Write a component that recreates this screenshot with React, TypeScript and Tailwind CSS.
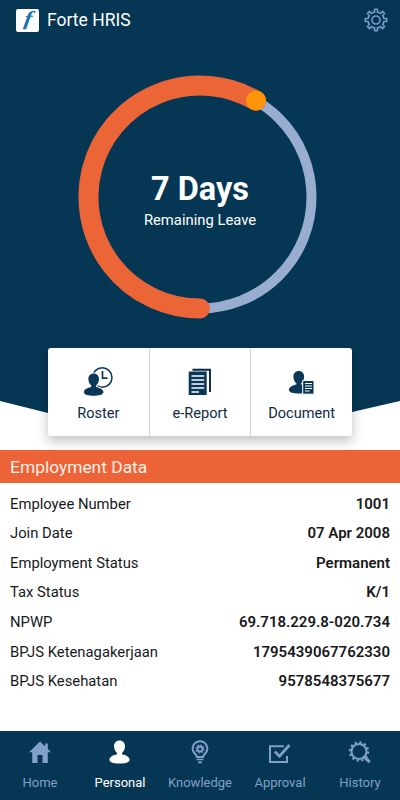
import type { ReactNode } from 'react';

const PERSON =
  'M12 0C8.4 0 6.300 2.500 6.300 6c0 3.200 1.500 5.600 3.100 7v1.400C5.500 15.400 1.500 16.800 1.500 20.200c0 2.500 5 3.800 10.500 3.800s10.500-1.300 10.500-3.800c0-3.400-4-4.800-7.900-5.800V13c1.600-1.400 3.100-3.800 3.100-7C17.700 2.500 15.600 0 12 0Z';

const employment = [
  { label: 'Employee Number', value: '1001' },
  { label: 'Join Date', value: '07 Apr 2008' },
  { label: 'Employment Status', value: 'Permanent' },
  { label: 'Tax Status', value: 'K/1' },
  { label: 'NPWP', value: '69.718.229.8-020.734' },
  { label: 'BPJS Ketenagakerjaan', value: '1795439067762330' },
  { label: 'BPJS Kesehatan', value: '9578548375677' },
];

function gearPath(teeth: number, center: number, outer: number, inner: number) {
  const step = 360 / teeth;
  const points: string[] = [];
  for (let i = 0; i < teeth; i++) {
    const corners = [
      [-0.24, inner],
      [-0.17, outer],
      [0.17, outer],
      [0.24, inner],
      [0.5, inner],
    ];
    for (const [offset, radius] of corners) {
      const angle = ((i + offset) * step * Math.PI) / 180;
      points.push(`${(center + radius * Math.sin(angle)).toFixed(2)} ${(center - radius * Math.cos(angle)).toFixed(2)}`);
    }
  }
  return `M${points.join('L')}Z`;
}

function LogoIcon() {
  return (
    <svg width="23" height="23" viewBox="0 0 23 23" className="shrink-0 overflow-visible">
      <rect width="23" height="23" rx="2" fill="#fff" />
      <text
        transform="translate(7.2 15.8) skewX(-8) scale(1.25 1)"
        fontSize="20"
        fill="#1874ae"
        className="font-['Liberation_Serif',serif] font-bold italic"
      >
        f
      </text>
    </svg>
  );
}

function GearIcon() {
  return (
    <svg width="24" height="24" viewBox="0 0 24 24" fill="none" stroke="#7c9bc8" strokeWidth="1.600" strokeLinejoin="round">
      <path d={gearPath(8, 12, 10.8, 8)} />
      <circle cx="12" cy="12" r="4" />
    </svg>
  );
}

function LeaveRing() {
  return (
    <svg width="244" height="244" viewBox="78 75 244 244" fill="none">
      <circle cx="200" cy="197" r="111.500" stroke="#98add0" strokeWidth="10" />
      <path d="M200 308.500A111.500 111.500 0 1 1 256 100.600" stroke="#ec6537" strokeWidth="20" strokeLinecap="round" />
      <circle cx="256" cy="100.600" r="10" fill="#ff9408" />
    </svg>
  );
}

function RosterIcon() {
  return (
    <svg width="32" height="32" viewBox="0 0 32 32" fill="#0a3757">
      <circle cx="20.300" cy="12.500" r="9.700" fill="none" stroke="#0a3757" strokeWidth="1.500" />
      <path d="M20.500 6v7.200h5" fill="none" stroke="#0a3757" strokeWidth="1.700" />
      <path d={PERSON} transform="translate(.5 8.500) scale(.93)" stroke="#fff" strokeWidth="2.400" />
      <path d={PERSON} transform="translate(.5 8.500) scale(.93)" />
    </svg>
  );
}

function ReportIcon() {
  return (
    <svg width="32" height="32" viewBox="0 0 32 32">
      <path d="M8.500 4.700H26V27" fill="none" stroke="#0a2447" strokeWidth="1.900" />
      <path d="M4.700 6.500h18V30h-18z" fill="#0a3757" />
      <path d="M7.500 11h12.700M7.500 15h12.700M7.500 19h12.700M7.500 23h12.700M7.500 27h7.500" stroke="#fff" strokeWidth="1.400" />
    </svg>
  );
}

function DocumentIcon() {
  return (
    <svg width="32" height="32" viewBox="0 0 32 32" fill="#0a3757">
      <path d={PERSON} transform="translate(1.500 6) scale(.94)" />
      <path d="M16.700 15.500h11.300v13.700H16.700z" stroke="#fff" />
      <path d="M19 18.500h7M19 21h7M19 23.500h7M19 26h4.500" stroke="#fff" />
    </svg>
  );
}

function HomeIcon() {
  return (
    <svg width="24" height="24" viewBox="0 0 24 24" fill="currentColor">
      <path d="M12 1.500 1 12.300h3.200V23H9.500v-8h5v8h5.300V12.300H23l-3.200-3.200V3.500h-2.600v3Z" />
    </svg>
  );
}

function PersonIcon() {
  return (
    <svg width="24" height="24" viewBox="0 0 24 24" fill="currentColor">
      <path d={PERSON} transform="translate(0 .5) scale(.96)" />
    </svg>
  );
}

function KnowledgeIcon() {
  return (
    <svg width="24" height="24" viewBox="0 0 24 24" fill="none" stroke="currentColor">
      <path d="M9 17c0-2.500-4.500-4-4.500-8.200a7.500 7.500 0 0 1 15 0C19.500 13 15 14.500 15 17Z" strokeWidth="2" />
      <circle cx="12" cy="9" r="2.500" strokeWidth="1.900" />
      <circle cx="12" cy="9" r="4" strokeWidth="1.300" strokeDasharray="1.570 1.570" />
      <path d="M8.500 19.500h7M10 22.300h4" strokeWidth="1.700" />
    </svg>
  );
}

function ApprovalIcon() {
  return (
    <svg width="24" height="24" viewBox="0 0 24 24" fill="none" stroke="currentColor">
      <path d="M16 6.300H2V22h17v-6" strokeWidth="2" />
      <path d="m6.800 11.500 4.700 4.700L21.500 5" strokeWidth="2.700" />
    </svg>
  );
}

function HistoryIcon() {
  return (
    <svg width="24" height="24" viewBox="0 0 24 24" fill="none" stroke="currentColor">
      <circle cx="11" cy="11.500" r="7.500" strokeWidth="2" />
      <circle cx="11" cy="11.500" r="9.200" strokeWidth="2" strokeDasharray="2.410 2.410" />
      <path d="m15.500 16 6.200 6.200" strokeWidth="3.200" />
    </svg>
  );
}

function Shortcut({ icon, label }: { icon: ReactNode; label: string }) {
  return (
    <button className="flex flex-1 flex-col items-center pt-[17px]">
      {icon}
      <span className="mt-[6px] text-[14.600px] leading-5 text-[#102b40]">{label}</span>
    </button>
  );
}

const tabs = [
  { label: 'Home', icon: <HomeIcon /> },
  { label: 'Personal', icon: <PersonIcon />, active: true },
  { label: 'Knowledge', icon: <KnowledgeIcon /> },
  { label: 'Approval', icon: <ApprovalIcon /> },
  { label: 'History', icon: <HistoryIcon /> },
];

export default function App() {
  return (
    <div className="flex h-[800px] w-[400px] flex-col overflow-hidden bg-white font-[Roboto,sans-serif]">
      <div className="flex h-[413px] shrink-0 flex-col items-center bg-[#053754] [clip-path:polygon(0_0,100%_0,100%_401px,352px_412px,48px_413px,0_401px)]">
        <header className="flex h-10 w-full items-center justify-between pr-3 pl-4">
          <div className="flex items-center gap-2">
            <LogoIcon />
            <h1 className="pt-px text-[17.500px] text-white">Forte HRIS</h1>
          </div>
          <GearIcon />
        </header>
        <div className="mt-[35px] grid place-items-center">
          <div className="col-start-1 row-start-1">
            <LeaveRing />
          </div>
          <div className="col-start-1 row-start-1 pt-[7px] text-center text-white">
            <p className="text-[32.500px] leading-9 font-bold">7 Days</p>
            <p className="mt-[3px] text-[14.800px] leading-5">Remaining Leave</p>
          </div>
        </div>
      </div>

      <div className="relative z-10 mx-12 -mt-[65px] flex h-[88px] shrink-0 divide-x divide-[#d0d3d6] rounded-[3px] bg-white shadow-[0_5px_12px_rgba(0,0,0,0.25)]">
        <Shortcut icon={<RosterIcon />} label="Roster" />
        <Shortcut icon={<ReportIcon />} label="e-Report" />
        <Shortcut icon={<DocumentIcon />} label="Document" />
      </div>

      <h2 className="relative z-20 mt-[14px] flex h-[33px] shrink-0 items-center bg-[#ec6337] px-2.5 pt-0.5 text-[17.400px] text-[#fff1e8]">
        Employment Data
      </h2>

      <dl className="flex flex-1 flex-col px-2.5 pt-[6px]">
        {employment.map((row) => (
          <div key={row.label} className="flex h-[29.600px] items-center justify-between text-[14.800px] text-[#17191b]">
            <dt>{row.label}</dt>
            <dd className="text-[15px] font-semibold">{row.value}</dd>
          </div>
        ))}
      </dl>

      <nav className="flex h-[69px] shrink-0 bg-[#053754]">
        {tabs.map((tab) => (
          <button
            key={tab.label}
            className={`flex w-20 flex-col items-center pt-[9px] ${tab.active ? 'text-white' : 'text-[#819fc8]'}`}
          >
            {tab.icon}
            <span className="mt-[9px] text-[13px] leading-5">{tab.label}</span>
          </button>
        ))}
      </nav>
    </div>
  );
}
